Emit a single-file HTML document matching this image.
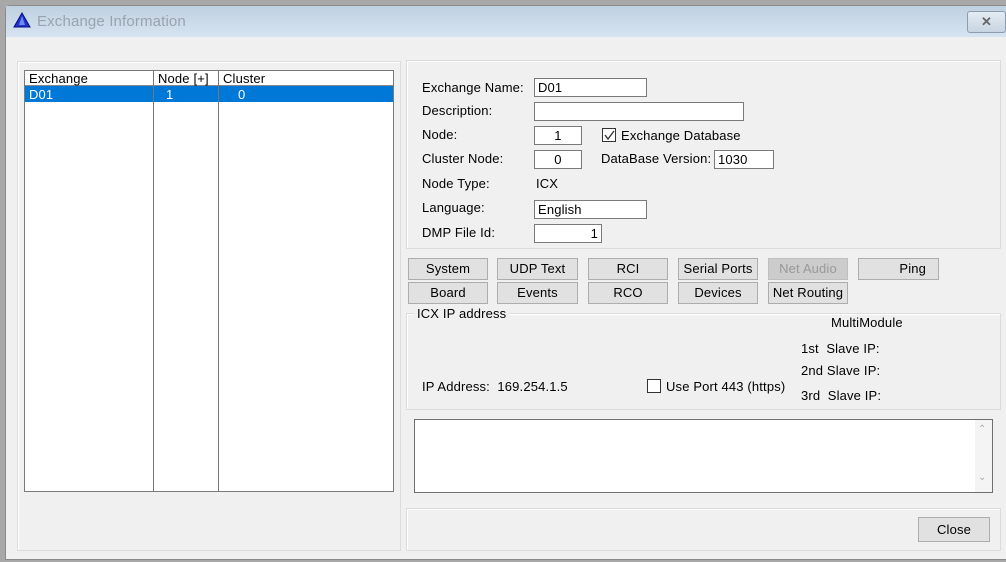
<!DOCTYPE html>
<html><head><style>
*{box-sizing:border-box;margin:0;padding:0}
body{width:1006px;height:562px;background:#a8a8a8;position:relative;overflow:hidden;font-family:"Liberation Sans",sans-serif;font-size:13px;letter-spacing:0.15px;color:#000}
.a{position:absolute}
.win{left:5px;top:5px;width:1010px;height:555px;background:#f0f0f0;border:1px solid #8a8a8a;border-radius:5px 5px 0 0}
.title{left:6px;top:6px;width:1000px;height:31px;background:linear-gradient(#bfd0e0,#d6e4f1)}
.grp{border:1px solid #dcdcdc;box-shadow:inset 1px 1px 0 #fff}
.inp{background:#fff;border:1px solid #7a7a7a;height:19px;padding:0 3px;line-height:17px}
.btn{background:#e1e1e1;border:1px solid #adadad;height:22px;text-align:center;line-height:20px}
.lbl{line-height:15px}
</style></head><body>
<div class="a win"></div>
<div class="a title"></div>
<svg class="a" style="left:13px;top:12px" width="18" height="16"><polygon points="9,1 17,15 1,15" fill="#2233cc" stroke="#001080"/><polygon points="9,4 12,13 6,13" fill="#6f8af0"/></svg>
<div class="a" style="left:37px;top:13px;font-size:15px;color:#9aa3ad">Exchange Information</div>
<div class="a" style="left:967px;top:11px;width:39px;height:22px;border:1px solid #8c9cb0;border-radius:3px;background:linear-gradient(#e4ecf4,#c8d4e2);text-align:center;color:#666;font-weight:bold;font-size:13px;line-height:20px">✕</div>

<div class="a grp" style="left:17px;top:61px;width:384px;height:490px"></div>
<div class="a" style="left:24px;top:70px;width:370px;height:422px;background:#fff;border:1px solid #7a7a7a"></div>
<div class="a" style="left:25px;top:71px;width:368px;height:15px;border-bottom:1px solid #888"></div>
<div class="a" style="left:25px;top:86px;width:368px;height:16px;background:#0078d7"></div>
<div class="a" style="left:153px;top:71px;width:1px;height:420px;background:#777"></div>
<div class="a" style="left:218px;top:71px;width:1px;height:420px;background:#777"></div>
<div class="a lbl" style="left:29px;top:71px">Exchange</div>
<div class="a lbl" style="left:158px;top:71px">Node [+]</div>
<div class="a lbl" style="left:223px;top:71px">Cluster</div>
<div class="a lbl" style="left:29px;top:87px;color:#fff">D01</div>
<div class="a lbl" style="left:166px;top:87px;color:#fff">1</div>
<div class="a lbl" style="left:238px;top:87px;color:#fff">0</div>

<div class="a grp" style="left:406px;top:60px;width:595px;height:189px"></div>
<div class="a lbl" style="left:422px;top:80px">Exchange Name:</div>
<div class="a lbl" style="left:422px;top:103px">Description:</div>
<div class="a lbl" style="left:422px;top:127px">Node:</div>
<div class="a lbl" style="left:422px;top:151px">Cluster Node:</div>
<div class="a lbl" style="left:422px;top:176px">Node Type:</div>
<div class="a lbl" style="left:422px;top:200px">Language:</div>
<div class="a lbl" style="left:422px;top:225px">DMP File Id:</div>
<div class="a inp" style="left:534px;top:78px;width:113px">D01</div>
<div class="a inp" style="left:534px;top:102px;width:210px"></div>
<div class="a inp" style="left:534px;top:126px;width:48px;text-align:center">1</div>
<div class="a inp" style="left:534px;top:150px;width:48px;text-align:center">0</div>
<div class="a lbl" style="left:536px;top:176px">ICX</div>
<div class="a inp" style="left:534px;top:200px;width:113px">English</div>
<div class="a inp" style="left:534px;top:224px;width:68px;text-align:right">1</div>
<div class="a" style="left:602px;top:128px;width:14px;height:14px;border:1px solid #333;background:#fff"></div>
<svg class="a" style="left:603px;top:129px" width="13" height="13"><path d="M2 6 L5 10 L11 2" stroke="#333" stroke-width="1.4" fill="none"/></svg>
<div class="a lbl" style="left:621px;top:128px">Exchange Database</div>
<div class="a lbl" style="left:601px;top:151px">DataBase Version:</div>
<div class="a inp" style="left:714px;top:150px;width:60px">1030</div>

<div class="a btn" style="left:408px;top:258px;width:80px">System</div>
<div class="a btn" style="left:497px;top:258px;width:81px">UDP Text</div>
<div class="a btn" style="left:588px;top:258px;width:80px">RCI</div>
<div class="a btn" style="left:678px;top:258px;width:80px">Serial Ports</div>
<div class="a btn" style="left:768px;top:258px;width:80px;color:#999;background:#ccc;border-color:#bfbfbf">Net Audio</div>
<div class="a btn" style="left:858px;top:258px;width:81px;text-align:right;padding-right:12px">Ping</div>
<div class="a btn" style="left:408px;top:282px;width:80px">Board</div>
<div class="a btn" style="left:497px;top:282px;width:81px">Events</div>
<div class="a btn" style="left:588px;top:282px;width:80px">RCO</div>
<div class="a btn" style="left:678px;top:282px;width:80px">Devices</div>
<div class="a btn" style="left:768px;top:282px;width:80px">Net Routing</div>

<div class="a grp" style="left:406px;top:313px;width:595px;height:97px"></div>
<div class="a lbl" style="left:414px;top:306px;background:#f0f0f0;padding:0 3px">ICX IP address</div>
<div class="a lbl" style="left:831px;top:315px">MultiModule</div>
<div class="a lbl" style="left:801px;top:341px">1st&nbsp; Slave IP:</div>
<div class="a lbl" style="left:801px;top:363px">2nd Slave IP:</div>
<div class="a lbl" style="left:801px;top:388px">3rd&nbsp; Slave IP:</div>
<div class="a lbl" style="left:422px;top:379px">IP Address:&nbsp; 169.254.1.5</div>
<div class="a" style="left:647px;top:379px;width:14px;height:14px;border:1px solid #333;background:#fff"></div>
<div class="a lbl" style="left:666px;top:379px">Use Port 443 (https)</div>

<div class="a" style="left:414px;top:419px;width:579px;height:74px;background:#fff;border:1px solid #6e6e6e"></div>
<div class="a" style="left:975px;top:420px;width:17px;height:72px;background:#f4f4f4"></div>
<div class="a" style="left:978px;top:424px;color:#aaa;font-size:10px">&#8963;</div>
<div class="a" style="left:978px;top:472px;color:#aaa;font-size:10px">&#8964;</div>

<div class="a grp" style="left:406px;top:508px;width:595px;height:43px"></div>
<div class="a btn" style="left:918px;top:517px;width:72px;height:25px;line-height:23px">Close</div>
</body></html>
